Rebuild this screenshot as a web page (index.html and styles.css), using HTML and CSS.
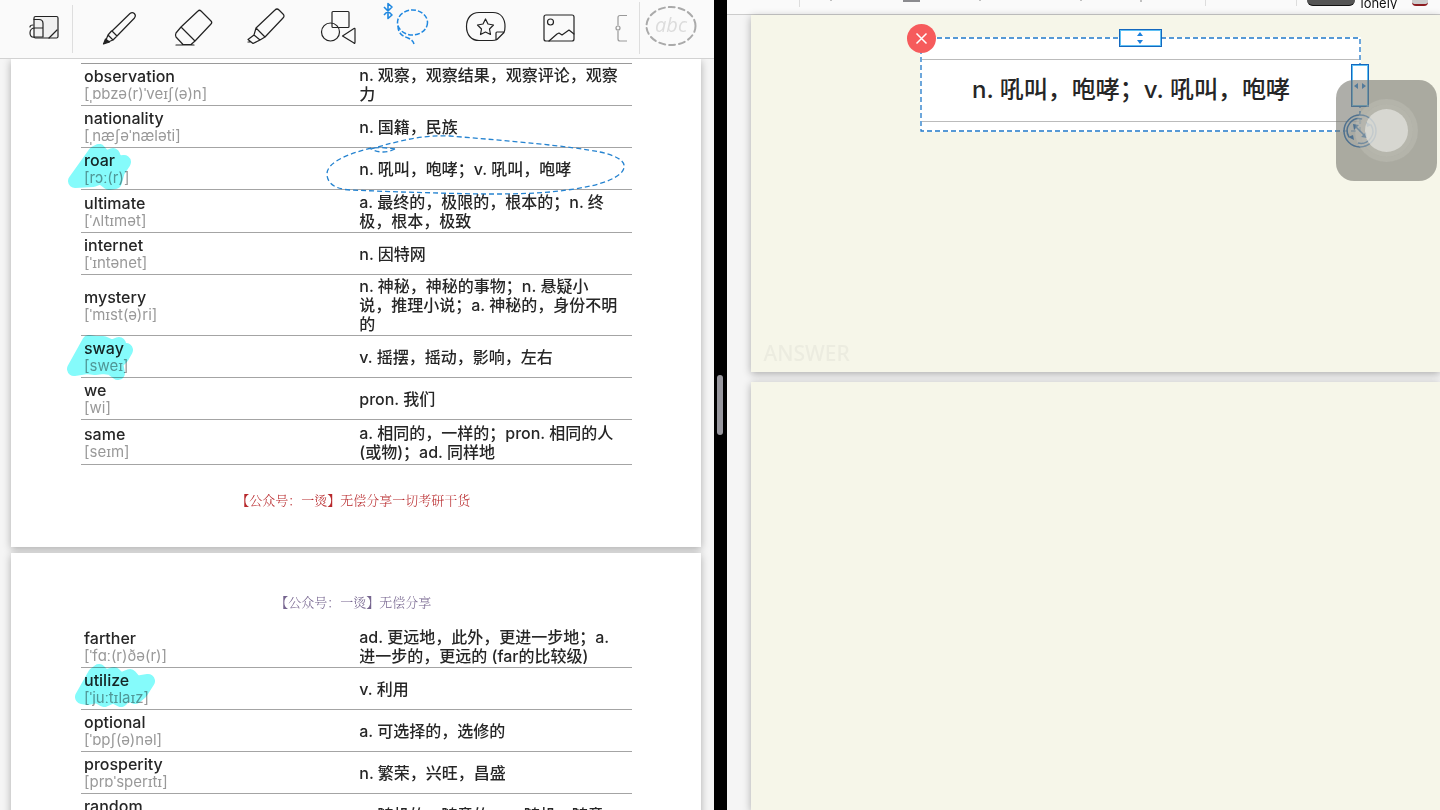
FILE: index.html
```html
<!DOCTYPE html>
<html lang="zh-CN">
<head>
<meta charset="utf-8">
<title>Vocabulary notes</title>
<link rel="stylesheet" href="styles.css">
</head>
<body>
<main class="split">
  <section class="pane">
    <header class="toolbar">
      <button class="tool tool-first" aria-label="Read mode"><svg width="72" height="57" viewBox="0 0 72 57"><rect x="34" y="16.500" width="24" height="21.500" rx="1.500" fill="#f0f0f0"/><path d="M34 19.500h5q4 0 4 4V37M43 28h-8q-5 0-5 5t5 4h8M30 27q0-2 3-2M49 38l8-8"/></svg></button>
      <nav class="tools">
        <button class="tool" aria-label="Pen"><svg width="73" height="57" viewBox="0 0 73 57"><path d="M29 31L47 13.500c3-2.500 7 1 4.500 4.500L34 36z M28.500 31L25 35l5 5 4-4M25 35l-2 5M30 40l-5 2"/><path d="M20.500 44l2-5 4 3z" fill="#222"/></svg></button>
        <button class="tool" aria-label="Eraser"><svg width="73" height="57" viewBox="0 0 73 57"><path d="M25 27L42 11q1.500-1.500 3 0l10 10q1.500 1.500 0 3L39 41zM25 27l-5 6q-1 2 0 4l7 7.500h8l4-3.500M20 45h18"/></svg></button>
        <button class="tool" aria-label="Highlighter"><svg width="73" height="57" viewBox="0 0 73 57"><path d="M27 28L46 10q2-2 4 0l4 4q2 2 0 4L36 37zM27 28l-2 7 6 5 5-3M25 35l-6 4.500 5 4L31 40M21 42l-2 0"/></svg></button>
        <button class="tool" aria-label="Shapes"><svg width="73" height="57" viewBox="0 0 73 57"><rect x="30" y="11.500" width="17" height="16" rx="1"/><circle cx="28.500" cy="32" r="9"/><path d="M40.500 36L52 28.500q1-.5 1 .5v13q0 2-1 1z"/></svg></button>
        <button class="tool tool-active" aria-label="Lasso"><svg width="73" height="57" viewBox="0 0 73 57"><path d="M9 7l8 8-4 3.500v-15l4 3.500-8 8" stroke-width="1.600"/><g stroke-dasharray="5 2"><ellipse cx="37.500" cy="22.500" rx="15" ry="12.500"/><path d="M23 26c0 7 4 10 10 12q5 2 6 6"/></g></svg></button>
        <button class="tool" aria-label="Stickers"><svg width="73" height="57" viewBox="0 0 73 57"><path d="M31 12.500h14c8 0 12 6 12 14 0 2 0 4-1 6l-7 7c-2 1-3 1-5 1H31c-8 0-12.500-6-12.500-14s4.500-14 12.500-14zM48 40v-7q0-1 1-1h7"/><path d="M37.500 19l2.500 5 5.500 1-4 4 1 5.500-5-2.500-5 2.500 1-5.500-4-4 5.500-1z"/></svg></button>
        <button class="tool" aria-label="Image"><svg width="73" height="57" viewBox="0 0 73 57"><rect x="23" y="15" width="30" height="26" rx="2"/><circle cx="29.500" cy="22" r="3"/><path d="M28 41l8-7 2-1 3 2 7-5 5 4"/></svg></button>
        <button class="tool tool-faded" aria-label="More"><svg width="73" height="57" viewBox="0 0 73 57"><path d="M34 15.500h-8q-2 0-2 2V25M24 31v8q0 2 2 2h8"/><circle cx="24" cy="28" r="2"/></svg></button>
      </nav>
      <button class="tool tool-text" aria-label="Recognise text"><svg width="63" height="52" viewBox="0 0 63 52"><ellipse cx="31" cy="24" rx="24.500" ry="19" stroke-dasharray="6 4"/></svg><span class="abc">abc</span></button>
    </header>
    <div class="sheets">
      <article class="sheet sheet-upper">
        <table class="words">
          <tr><td><b>observation</b><i>[ˌɒbzə(r)ˈveɪʃ(ə)n]</i></td><td>n. 观察，观察结果，观察评论，观察<br>力</td></tr>
          <tr><td><b>nationality</b><i>[ˌnæʃəˈnæləti]</i></td><td>n. 国籍，民族</td></tr>
          <tr><td><b>roar</b><i>[rɔː(r)]</i><svg class="mark" width="90" height="50" viewBox="0 0 90 50"><path d="M8 37L28 9l4-2 6 7 8-3 3 8 8-1-6 9-3 11-6 1-8-6-8 3z"/></svg></td><td>n. 吼叫，咆哮；v. 吼叫，咆哮<svg class="lasso" width="300" height="62" viewBox="0 0 300 62"><path d="M69 14Q57 20 45 14C75 5 97 0 124 1C184 6 244 11 274 17C296 22 303 29 295 38C282 50 252 54 224 57C174 61 124 58 74 57L24 55C6 54 1 46 1 39C1 27 22 19 45 13Q58 12 69 14"/></svg></td></tr>
          <tr class="tall"><td><b>ultimate</b><i>[ˈʌltɪmət]</i></td><td>a. 最终的，极限的，根本的；n. 终<br>极，根本，极致</td></tr>
          <tr><td><b>internet</b><i>[ˈɪntənet]</i></td><td>n. 因特网</td></tr>
          <tr><td><b>mystery</b><i>[ˈmɪst(ə)ri]</i></td><td>n. 神秘，神秘的事物；n. 悬疑小<br>说，推理小说；a. 神秘的，身份不明<br>的</td></tr>
          <tr><td><b>sway</b><i>[sweɪ]</i><svg class="mark" width="90" height="50" viewBox="0 0 90 50"><path d="M7 37L22 10l6 1 8 0 9 4 7-3 1 7 6-1-4 7-6 6 2 10-7-5-8-1-8 1-8-1z"/></svg></td><td>v. 摇摆，摇动，影响，左右</td></tr>
          <tr><td><b>we</b><i>[wi]</i></td><td>pron. 我们</td></tr>
          <tr class="last"><td><b>same</b><i>[seɪm]</i></td><td>a. 相同的，一样的；pron. 相同的人<br>(或物)；ad. 同样地</td></tr>
        </table>
        <p class="credit credit-red">【公众号：一烫】无偿分享一切考研干货</p>
      </article>
      <article class="sheet sheet-lower">
        <p class="credit credit-purple">【公众号：一烫】无偿分享</p>
        <table class="words words-open">
          <tr><td><b>farther</b><i>[ˈfɑː(r)ðə(r)]</i></td><td>ad. 更远地，此外，更进一步地；a.<br>进一步的，更远的 (far的比较级)</td></tr>
          <tr><td><b>utilize</b><i>[ˈjuːtɪlaɪz]</i><svg class="mark" width="90" height="50" viewBox="0 0 90 50"><path d="M15 33L28 10l4-3 6 6 9-3 6 6 10-4 6 7 12-2-7 11-6 5-8-3-6 6-8-4-9 4-7-4-9 2z"/></svg></td><td>v. 利用</td></tr>
          <tr><td><b>optional</b><i>[ˈɒpʃ(ə)nəl]</i></td><td>a. 可选择的，选修的</td></tr>
          <tr><td><b>prosperity</b><i>[prɒˈsperɪtɪ]</i></td><td>n. 繁荣，兴旺，昌盛</td></tr>
          <tr><td><b>random</b><i>[ˈrændəm]</i></td><td>a. 随机的，随意的；n. 随机，随意</td></tr>
        </table>
      </article>
    </div>
  </section>

  <div class="divider"><span class="grip"></span></div>

  <section class="pane">
    <header class="toolbar-cut">
      <svg class="cut-icons" width="580" height="14" viewBox="0 0 580 14"><path d="M72.500 0v7M478.500 0v6M569.500 0v6" stroke="#ddd"/><path d="M176 0h17v2h-17z" fill="#8b8b8f" stroke="none"/><path d="M104 0v1M253 0v1M354 0v1M414 0v2" stroke="#888"/></svg>
      <span class="swatch"></span>
      <span class="label">lonely</span>
      <span class="thumb"></span>
    </header>
    <div class="cards">
      <article class="card card-answer">
        <div class="selection">
          <p class="clip">n. 吼叫，咆哮；v. 吼叫，咆哮</p>
          <svg class="frame" width="100%" height="100%"><rect x="1" y="1" width="439" height="93"/></svg>
          <button class="close" aria-label="Remove"><svg width="29" height="29" viewBox="0 0 29 29"><path d="M9.500 9.500l10 10M19.500 9.500l-10 10"/></svg></button>
          <button class="stretch stretch-y" aria-label="Stretch vertically"><svg width="12" height="14" viewBox="0 0 12 14"><path d="M6 1l3 4H3zM6 13l3-4H3z"/></svg></button>
          <button class="stretch stretch-x" aria-label="Stretch horizontally"><svg width="14" height="12" viewBox="0 0 14 12"><path d="M1 6l4-3v6zM13 6L9 3v6z"/></svg></button>
          <button class="rotate" aria-label="Rotate and scale"><svg width="34" height="34" viewBox="0 0 34 34"><circle cx="17" cy="17" r="16" fill="#eef3f788"/><path d="M19 5A12 12 0 0 0 6 23M15 29A12 12 0 0 0 28 11M12 12l10 10"/><path d="M10 10l6 1-5 5zM24 24l-6-1 5-5zM5 23l6 3-1-5zM29 11l-6-3 1 5z" fill="#1468be" stroke="none"/></svg></button>
        </div>
        <span class="caption">ANSWER</span>
      </article>
      <article class="card"></article>
    </div>
    <button class="assist" aria-label="Assistive touch"><span class="assist-ring"><span class="assist-dot"></span></span></button>
  </section>
</main>
</body>
</html>
```
FILE: styles.css
```css
* { box-sizing: border-box; }

body {
  margin: 0;
  background: #000;
  color: #262626;
  font-family: Inter, "Noto Sans CJK SC", "Noto Sans", sans-serif;
}

button {
  border: 0;
  padding: 0;
  background: none;
  font: inherit;
}

svg { display: block; fill: none; }

.split {
  display: grid;
  grid-template-columns: minmax(0, 1fr) 13px minmax(0, 1fr);
  height: 100vh;
  overflow: hidden;
}

.pane {
  position: relative;
  display: flex;
  flex-direction: column;
  min-height: 0;
  overflow: hidden;
  background: #f5f5f5;
}

.divider {
  display: flex;
  align-items: center;
  justify-content: center;
  background: #000;
}

.grip {
  width: 6px;
  height: 60px;
  border-radius: 3px;
  background: #98979e;
}

/* Toolbar */
.toolbar {
  position: relative;
  z-index: 2;
  display: flex;
  flex: none;
  align-items: flex-start;
  height: 59px;
  border-bottom: 1px solid #d2d2d2;
  background: #fafafa;
}

.tool {
  flex: none;
  stroke: #222;
  stroke-width: 1.2;
  stroke-linejoin: round;
  stroke-linecap: round;
}

.tool-first {
  margin-right: 10px;
  background: linear-gradient(#dedede, #dedede) right / 1px 48px no-repeat;
  width: 73px;
}

.tools {
  display: flex;
  flex: 1;
  min-width: 0;
  overflow: hidden;
}

.tool-active { stroke: #2088e0; stroke-width: 1.5; }
.tool-active svg { stroke-linecap: butt; }
.tool-faded { stroke: #999; }

.tool-text {
  position: relative;
  margin: 2px 0 0 12px;
  padding-right: 11px;
  border-left: 1px solid #dedede;
  stroke: #aaa;
  stroke-width: 2;
}

.abc {
  position: absolute;
  inset: 10px 11px auto 0;
  color: #dcdcdc;
  font: italic 20px/26px "Open Sans", sans-serif;
}

/* Document pages */
.sheets {
  display: flex;
  flex: 1;
  flex-direction: column;
  gap: 6px;
  min-height: 0;
  padding: 0 13px 0 11px;
}

.sheet {
  position: relative;
  flex: none;
  padding: 4px 69px 0 70px;
  background: #fff;
  box-shadow: 0 2px 8px rgba(0, 0, 0, .3);
}

.sheet-upper { padding-bottom: 39px; }
.sheet-lower { padding-top: 40px; }

.words {
  width: 100%;
  border-collapse: separate;
  border-spacing: 0;
  border-top: 1px solid #9a9a9a;
  table-layout: fixed;
}

.words-open { border-top: 0; }

.words td {
  position: relative;
  height: 42px;
  padding: 2px 0 1px 3px;
  border-bottom: 1px solid #a4a4a4;
  font-size: 16px;
  font-weight: 500;
  line-height: 19px;
  vertical-align: middle;
  white-space: nowrap;
}

.words .tall td { height: 43px; }
.words .last td { height: 45px; }

.words b {
  display: block;
  font-size: 16px;
  font-weight: 500;
  line-height: 17px;
}

.words i {
  display: block;
  color: #999;
  font-size: 15px;
  font-style: normal;
  font-weight: 400;
  line-height: 17px;
}

.mark {
  position: absolute;
  top: -4px;
  left: -14px;
  fill: #85fbfb;
  stroke: #85fbfb;
  stroke-width: 14;
  stroke-linecap: round;
  stroke-linejoin: round;
  mix-blend-mode: multiply;
}

.lasso {
  position: absolute;
  top: -13px;
  left: -30px;
  stroke: #2583d0;
  stroke-width: 1.3;
  stroke-dasharray: 5 3;
}

.credit {
  margin: 0;
  padding-right: 6px;
  font-family: "Noto Serif CJK SC", "Noto Sans CJK SC", serif;
  font-size: 13px;
  font-weight: 300;
  line-height: 17px;
  text-align: center;
}

.credit-red { margin-top: 26px; color: #b8292c; }
.credit-purple { margin-bottom: 16px; color: #76658f; }

/* Flash cards */
.toolbar-cut {
  display: flex;
  flex: none;
  align-items: flex-start;
  height: 15px;
  overflow: hidden;
  border-bottom: 1px solid #ccc;
  background: #fafafa;
}

.cut-icons { flex: none; }

.swatch {
  flex: none;
  width: 48px;
  height: 6px;
  border-bottom: 1px solid #111;
  border-radius: 0 0 6px 6px;
  background: #555;
}

.label {
  display: flex;
  align-items: flex-end;
  height: 9px;
  margin-left: 6px;
  overflow: hidden;
  background: #fff;
  color: #111;
  font-size: 13px;
  line-height: 12px;
}

.thumb {
  width: 16px;
  height: 6px;
  margin-left: 15px;
  border-bottom: 2px solid #8c1c20;
  border-radius: 0 0 4px 4px;
  background: #ccc;
}

.cards {
  display: flex;
  flex: 1;
  flex-direction: column;
  gap: 10px;
  padding-left: 24px;
}

.card {
  position: relative;
  flex: 1;
  background: #f6f6e9;
  box-shadow: 0 2px 8px rgba(0, 0, 0, .3);
}

.card-answer {
  display: flex;
  flex: none;
  align-items: flex-end;
  height: 357px;
  padding: 0 13px 7px;
}

.caption {
  color: #ecece0;
  font: 500 21px/24px "Noto Sans", sans-serif;
}

.selection {
  position: absolute;
  top: 22px;
  left: 169px;
  width: 441px;
  height: 95px;
  padding: 22px 2px 8px;
  background: #fff;
}

.clip {
  margin: 0;
  border: solid #bbb;
  border-width: 1px 0;
  padding: 11px 18px 13px 0;
  font-size: 24px;
  font-weight: 500;
  line-height: 37px;
  text-align: center;
}

.frame {
  position: absolute;
  inset: 0;
  stroke: #1f78c8;
  stroke-width: 1.3;
  stroke-dasharray: 5 3;
}

.close {
  position: absolute;
  top: -13px;
  left: -13px;
  border-radius: 50%;
  background: #f65b5c;
  stroke: #fff;
  stroke-width: 1.5;
}

.stretch {
  position: absolute;
  display: flex;
  align-items: center;
  justify-content: center;
  border: 1px solid #1468be;
  outline: 1px solid #5fc0f4;
  outline-offset: -2px;
  background: #fff;
}

.stretch svg { flex: none; fill: #1d80dc; }
.stretch-y { top: -8px; left: 199px; width: 43px; height: 18px; }
.stretch-x { top: 27px; right: -8px; width: 18px; height: 43px; }

.rotate {
  position: absolute;
  right: -16px;
  bottom: -16px;
  stroke: #1468be;
  stroke-width: 1.5;
}

.assist {
  position: absolute;
  top: 80px;
  right: 3px;
  display: flex;
  align-items: center;
  justify-content: center;
  width: 101px;
  height: 101px;
  border-radius: 18px;
  background: rgba(120, 120, 112, .6);
}

.assist-ring {
  padding: 5px;
  border: 5px solid rgba(200, 200, 192, .3);
  border-radius: 50%;
  background: rgba(205, 205, 198, .3);
  background-clip: padding-box;
}

.assist-dot {
  display: block;
  width: 43px;
  height: 43px;
  border-radius: 50%;
  background: rgba(230, 230, 225, .7);
}
```
